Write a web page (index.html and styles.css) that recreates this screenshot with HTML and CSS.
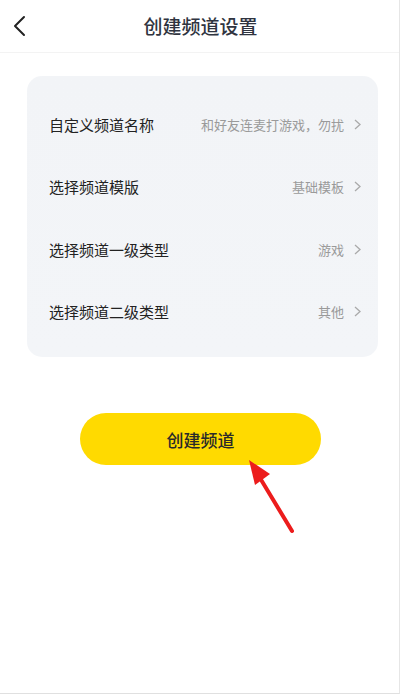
FILE: index.html
```html
<!DOCTYPE html>
<html lang="zh">
<head>
<meta charset="utf-8">
<link rel="stylesheet" href="styles.css">
</head>
<body>
<div class="screen">
  <header class="topbar">
    <svg class="back" width="14" height="22" viewBox="0 0 14 22"><path d="M11 2 L2 11 L11 20" fill="none" stroke="#222" stroke-width="2" stroke-linecap="round" stroke-linejoin="round"/></svg>
    <div class="title">创建频道设置</div>
  </header>
  <section class="card">
    <div class="row"><span class="label">自定义频道名称</span><span class="value">和好友连麦打游戏，勿扰</span><svg class="chev" width="7" height="11" viewBox="0 0 7 11"><path d="M1 1 L6 5.5 L1 10" fill="none" stroke="#aaa" stroke-width="1.3"/></svg></div>
    <div class="row"><span class="label">选择频道模版</span><span class="value">基础模板</span><svg class="chev" width="7" height="11" viewBox="0 0 7 11"><path d="M1 1 L6 5.5 L1 10" fill="none" stroke="#aaa" stroke-width="1.3"/></svg></div>
    <div class="row"><span class="label">选择频道一级类型</span><span class="value">游戏</span><svg class="chev" width="7" height="11" viewBox="0 0 7 11"><path d="M1 1 L6 5.5 L1 10" fill="none" stroke="#aaa" stroke-width="1.3"/></svg></div>
    <div class="row"><span class="label">选择频道二级类型</span><span class="value">其他</span><svg class="chev" width="7" height="11" viewBox="0 0 7 11"><path d="M1 1 L6 5.5 L1 10" fill="none" stroke="#aaa" stroke-width="1.3"/></svg></div>
  </section>
  <div class="btn-wrap">
    <div class="btn">创建频道</div>
  </div>
  <svg class="arrow" width="400" height="694" viewBox="0 0 400 694">
    <line x1="292" y1="531" x2="260" y2="478" stroke="#ec1c1c" stroke-width="4" stroke-linecap="round"/>
    <polygon points="249,460 270,474 255,485" fill="#ec1c1c"/>
  </svg>
</div>
</body>
</html>
```
FILE: styles.css
```css
html, body {
  margin: 0;
  padding: 0;
  background: #fff;
}
body {
  font-family: "Noto Sans CJK SC", "Noto Sans", sans-serif;
}
.screen {
  position: relative;
  width: 399px;
  height: 693px;
  border-right: 1px solid #e6e6e6;
  border-bottom: 1px solid #e0e0e0;
  overflow: hidden;
}
.topbar {
  position: relative;
  height: 52px;
  border-bottom: 1px solid #f3f3f3;
  display: flex;
  align-items: center;
  justify-content: center;
}
.back {
  position: absolute;
  left: 13px;
  top: 15px;
}
.title {
  font-size: 19px;
  color: #2f3440;
  font-weight: 500;
  margin-top: -1px;
  margin-left: 2px;
}
.card {
  margin: 23px 21px 0 27px;
  height: 281px;
  box-sizing: border-box;
  padding: 17px 17px 14px 22px;
  border-radius: 15px;
  background: linear-gradient(180deg, #f2f4f7 0%, #f3f5f8 100%);
  display: flex;
  flex-direction: column;
}
.row {
  height: 62.5px;
  display: flex;
  align-items: center;
}
.label {
  flex: 1;
  font-size: 15px;
  color: #222;
}
.value {
  font-size: 13px;
  color: #9a9a9a;
  margin-right: 10px;
}
.chev {
  display: block;
}
.btn-wrap {
  display: flex;
  justify-content: center;
  padding: 56px 0 0 0;
  margin-left: 2px;
}
.btn {
  width: 241px;
  height: 52px;
  border-radius: 26px;
  background: #ffda00;
  display: flex;
  align-items: center;
  justify-content: center;
  font-size: 17px;
  color: #2a2a2a;
  font-weight: 500;
}
.arrow {
  position: absolute;
  left: 0;
  top: 0;
  pointer-events: none;
}
```
